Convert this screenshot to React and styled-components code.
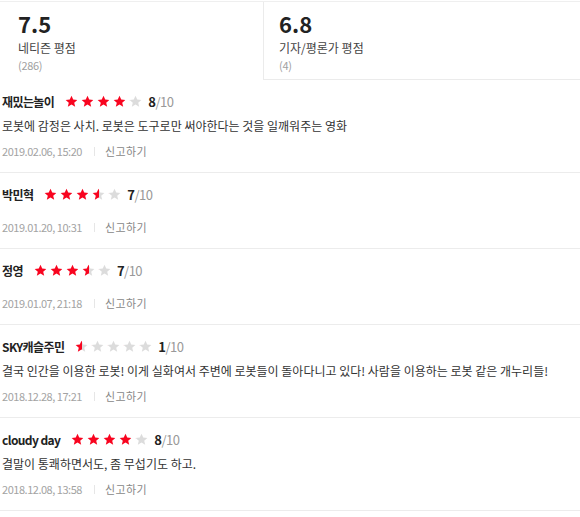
import React, { useId } from 'react'
import styled, { createGlobalStyle } from 'styled-components'

const GlobalStyle = createGlobalStyle`
  body {
    margin: 0;
    background: #fff;
    font-family: "Noto Sans CJK KR", "Noto Sans", sans-serif;
    color: #333;
  }
`

const reviews = [
  { name: '재밌는놀이', score: 8, text: '로봇에 감정은 사치. 로봇은 도구로만 써야한다는 것을 일깨워주는 영화', date: '2019.02.06, 15:20' },
  { name: '박민혁', score: 7, text: '', date: '2019.01.20, 10:31' },
  { name: '정영', score: 7, text: '', date: '2019.01.07, 21:18' },
  { name: 'SKY캐슬주민', score: 1, text: '결국 인간을 이용한 로봇! 이게 실화여서 주변에 로봇들이 돌아다니고 있다! 사람을 이용하는 로봇 같은 개누리들!', date: '2018.12.28, 17:21' },
  { name: 'cloudy day', score: 8, text: '결말이 통쾌하면서도, 좀 무섭기도 하고.', date: '2018.12.08, 13:58' },
]

const Star = ({ fill }) => {
  const id = useId()
  const pct = `${Math.round(fill * 100)}%`
  return (
    <svg width="13" height="13" viewBox="0 0 24 24">
      <defs>
        <linearGradient id={id} x1="0" x2="1" y1="0" y2="0">
          <stop offset={pct} stopColor="#f8041f" />
          <stop offset={pct} stopColor="#dcdcdc" />
        </linearGradient>
      </defs>
      <path
        d="M12 1.2l3.2 7.1 7.6.7-5.8 5.1 1.8 7.6L12 17.7l-6.8 4 1.8-7.6-5.8-5.1 7.6-.7z"
        fill={`url(#${id})`}
      />
    </svg>
  )
}

const Stars = ({ score }) => (
  <S.Stars>
    {[0, 1, 2, 3, 4].map((i) => {
      const v = score / 2 - i
      return <Star key={i} fill={Math.max(0, Math.min(1, v))} />
    })}
  </S.Stars>
)

const App = () => (
  <S.Wrapper>
    <GlobalStyle />
    <S.Summary>
      <S.Tab $active>
        <S.Rating>7.5</S.Rating>
        <S.Label>네티즌 평점</S.Label>
        <S.Count>(286)</S.Count>
      </S.Tab>
      <S.Tab>
        <S.Rating>6.8</S.Rating>
        <S.Label>기자/평론가 평점</S.Label>
        <S.Count>(4)</S.Count>
      </S.Tab>
    </S.Summary>
    <S.List>
      {reviews.map((r) => (
        <S.Review key={r.date}>
          <S.Head>
            <S.Name>{r.name}</S.Name>
            <Stars score={r.score} />
            <S.Score>
              <b>{r.score}</b>/10
            </S.Score>
          </S.Head>
          <S.Content>{r.text}</S.Content>
          <S.Meta>
            <S.Date>{r.date}</S.Date>
            <S.Report>신고하기</S.Report>
          </S.Meta>
        </S.Review>
      ))}
    </S.List>
  </S.Wrapper>
)

export default App

export const S = {}

S.Wrapper = styled.div`
  width: 580px;
  padding-top: 1px;
`

S.Summary = styled.div`
  display: grid;
  grid-template-columns: 261px 1fr;
  padding-left: 2px;
  border-top: 1px solid #efefef;
`

S.Tab = styled.div`
  padding: 8px 15px 6px;
  border-left: 1px solid ${(p) => (p.$active ? 'transparent' : '#ebebeb')};
  border-bottom: 1px solid ${(p) => (p.$active ? 'transparent' : '#ebebeb')};
`

S.Rating = styled.div`
  font-size: 22px;
  line-height: 26px;
  font-weight: 700;
  color: #222;
`

S.Label = styled.div`
  margin-top: 4px;
  font-size: 12px;
  line-height: 16px;
  color: #444;
`

S.Count = styled.div`
  margin-top: 1px;
  font-size: 11px;
  line-height: 16px;
  letter-spacing: -0.3px;
  color: #a0a0a0;
`

S.List = styled.ul`
  margin: 0;
  padding: 0;
  list-style: none;
`

S.Review = styled.li`
  padding: 12px 2px 12px;
  border-bottom: 1px solid #ececec;
`

S.Head = styled.div`
  display: flex;
  align-items: center;
  height: 18px;
`

S.Name = styled.span`
  font-size: 12px;
  font-weight: 700;
  letter-spacing: -0.6px;
  color: #222;
  margin-right: 11px;
`

S.Stars = styled.span`
  display: flex;
  gap: 3px;
  margin-right: 6px;
`

S.Score = styled.span`
  font-size: 13px;
  color: #999;
  letter-spacing: -0.5px;

  b {
    color: #222;
  }
`

S.Content = styled.p`
  margin: 7px 0 0;
  min-height: 1px;
  font-size: 12px;
  line-height: 18px;
  color: #333;
`

S.Meta = styled.div`
  display: flex;
  align-items: center;
  margin-top: 7px;
  height: 18px;
  font-size: 11px;
`

S.Date = styled.span`
  color: #a3a3a3;
  letter-spacing: -0.47px;
  padding-right: 12px;
  border-right: 1px solid #e6e6e6;
  line-height: 9px;
`

S.Report = styled.span`
  color: #888;
  letter-spacing: 0.4px;
  margin-left: 10px;
`
